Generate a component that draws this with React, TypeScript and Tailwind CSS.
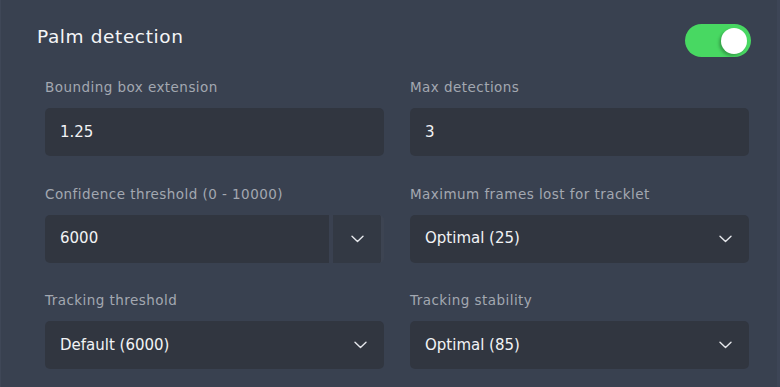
import { ReactNode } from "react";

/* ------------------ FIELDS ------------------ */
type Field = {
  label: string;
  value: string;
  kind: "input" | "select" | "number";
};

const fields: Field[] = [
  { label: "Bounding box extension", value: "1.25", kind: "input" },
  { label: "Max detections", value: "3", kind: "input" },
  { label: "Confidence threshold (0 - 10000)", value: "6000", kind: "number" },
  { label: "Maximum frames lost for tracklet", value: "Optimal (25)", kind: "select" },
  { label: "Tracking threshold", value: "Default (6000)", kind: "select" },
  { label: "Tracking stability", value: "Optimal (85)", kind: "select" },
];

function Chevron() {
  return (
    <svg width="13" height="8" viewBox="0 0 13 8" fill="none" className="shrink-0">
      <path d="M1 1.2 L6.5 6.4 L12 1.2" stroke="#e6e8ec" strokeWidth="1.4" strokeLinecap="round" strokeLinejoin="round" />
    </svg>
  );
}

function Control({ field }: { field: Field }) {
  if (field.kind === "number") {
    return (
      <div className="flex h-[48px] rounded-[5px] bg-[#313640] border-r-[3px] border-[#3d4452] overflow-hidden">
        <div className="flex flex-1 items-center pl-[15px] text-[15px] text-[#f2f3f5]">{field.value}</div>
        <div className="w-[4px] bg-[#3a4150]" />
        <div className="flex w-[48px] items-center justify-center bg-[#333944]">
          <Chevron />
        </div>
      </div>
    );
  }
  return (
    <div className="flex h-[48px] items-center justify-between rounded-[5px] bg-[#313640] pl-[15px] pr-[17px] text-[15px] text-[#f2f3f5]">
      <span>{field.value}</span>
      {field.kind === "select" && <Chevron />}
    </div>
  );
}

function Label({ children }: { children: ReactNode }) {
  return (
    <div className="mb-[11px] h-[20px] text-[13.5px] leading-[20px] tracking-[0.45px] text-[#a3a8b1]">
      {children}
    </div>
  );
}

export default function App() {
  return (
    <div
      className="flex min-h-[387px] w-full bg-[#394150]"
      style={{ fontFamily: '"DejaVu Sans", "Noto Sans", sans-serif' }}
    >
      <div className="w-px bg-[#3f4757]" />
      <div className="flex-1">
        {/* --- HEADER --- */}
        <div className="flex items-start justify-between pl-[36px] pr-[26px] pt-[24px]">
          <h2 className="text-[18.5px] leading-[26px] tracking-[0.6px] text-[#f4f5f7]">Palm detection</h2>
          <div className="relative h-[33px] w-[66px] rounded-full bg-[#48d862]">
            <div className="absolute right-[4px] top-[3.5px] h-[26px] w-[26px] rounded-full bg-white shadow-[-2px_2px_3px_rgba(0,0,0,0.25)]" />
          </div>
        </div>

        {/* --- GRID --- */}
        <div className="mt-[20px] ml-[44px] grid grid-cols-[339px_339px] gap-x-[26px] gap-y-[27.5px]">
          {fields.map((f) => (
            <div key={f.label}>
              <Label>{f.label}</Label>
              <Control field={f} />
            </div>
          ))}
        </div>
      </div>
      <div className="w-[3px] bg-[#3d4556]" />
    </div>
  );
}
